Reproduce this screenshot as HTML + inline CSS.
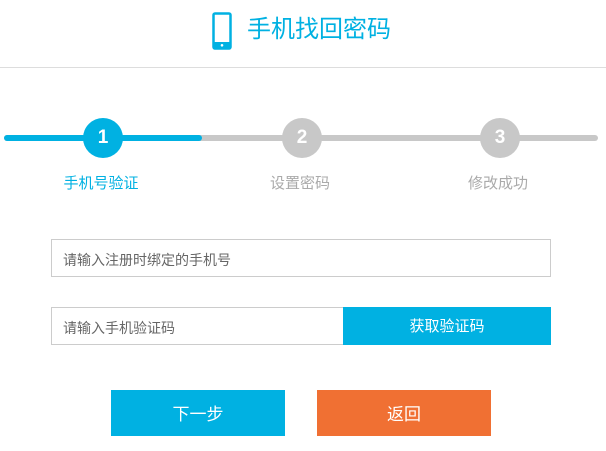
<!DOCTYPE html>
<html><head><meta charset="utf-8"><style>
*{margin:0;padding:0;box-sizing:border-box}
body{width:606px;height:451px;background:#fff;position:relative;overflow:hidden;font-family:"Liberation Sans","Noto Sans CJK SC",sans-serif}
.a{position:absolute}
.title{left:247px;top:14px;font-size:24px;color:#00b1e2;line-height:32px}
.hr{left:0;top:67px;width:606px;height:1px;background:#ddd}
.bar{top:135px;height:6px;border-radius:3px}
.c{width:40px;height:40px;border-radius:50%;top:118px;color:#fff;font-weight:bold;font-size:19px;text-align:center;line-height:40px}
.lb{top:174px;font-size:15px;width:110px;text-align:center;line-height:20px}
.in{border:1px solid #ccc;font-size:14px;color:#666;padding-left:11px;line-height:40px}
.btn{color:#fff;font-size:17px;text-align:center}
</style></head><body>
<svg class="a" style="left:212px;top:12px" width="20" height="38" viewBox="0 0 20 38"><rect x="1.5" y="1.5" width="17" height="35" rx="1.5" fill="none" stroke="#00b1e2" stroke-width="2.5"/><rect x="1.5" y="30" width="17" height="6.5" fill="#00b1e2"/><circle cx="10" cy="33.3" r="1.3" fill="#fff"/></svg>
<div class="a title">手机找回密码</div>
<div class="a hr"></div>
<div class="a bar" style="left:4px;width:594px;background:#c8c8c8"></div>
<div class="a bar" style="left:4px;width:198px;background:#00b1e2"></div>
<div class="a c" style="left:83px;background:#00b1e2">1</div>
<div class="a c" style="left:282px;background:#c8c8c8">2</div>
<div class="a c" style="left:480px;background:#c8c8c8">3</div>
<div class="a lb" style="left:46px;color:#00b1e2">手机号验证</div>
<div class="a lb" style="left:245px;color:#aaa">设置密码</div>
<div class="a lb" style="left:443px;color:#aaa">修改成功</div>
<div class="a in" style="left:51px;top:239px;width:500px;height:38px">请输入注册时绑定的手机号</div>
<div class="a in" style="left:51px;top:307px;width:293px;height:38px">请输入手机验证码</div>
<div class="a btn" style="left:343px;top:307px;width:208px;height:38px;line-height:40px;background:#00b1e2;font-size:15px">获取验证码</div>
<div class="a btn" style="left:111px;top:390px;width:174px;height:46px;line-height:50px;background:#00b1e2">下一步</div>
<div class="a btn" style="left:317px;top:390px;width:174px;height:46px;line-height:50px;background:#f07033">返回</div>
</body></html>
